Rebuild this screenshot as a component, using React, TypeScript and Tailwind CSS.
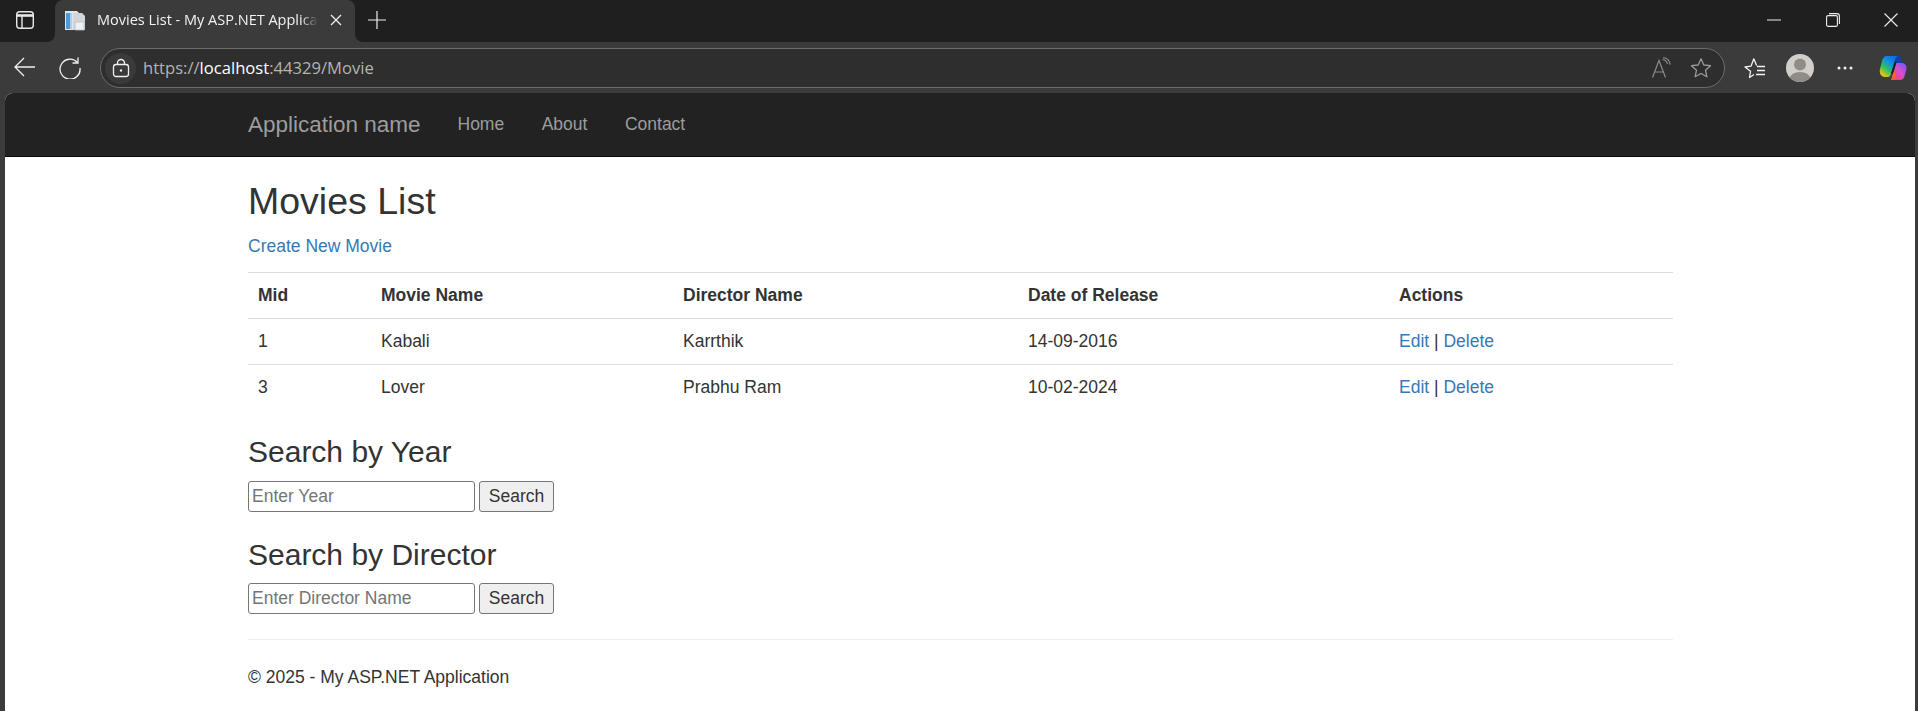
const movies = [
  { id: 1, name: 'Kabali', director: 'Karrthik', date: '14-09-2016' },
  { id: 3, name: 'Lover', director: 'Prabhu Ram', date: '10-02-2024' },
]

function SidebarIcon() {
  return (
    <svg width="20" height="20" viewBox="0 0 20 20" fill="none" stroke="#e8e8e8" strokeWidth="1.4">
      <rect x="1.7" y="1.7" width="16.6" height="16.6" rx="3" />
      <path d="M2 5.5h16" strokeWidth="2.6" />
      <path d="M7 5.5v12.5" />
    </svg>
  )
}

function Favicon() {
  return (
    <svg width="21" height="21" viewBox="0 0 21 21">
      <path d="M1 1h12l2 2v17H1z" fill="#dfe6ec" />
      <path d="M2 3h4v16H2z" fill="#4a9bdc" />
      <path d="M6 3h2v16H6z" fill="#a9d0ee" />
      <path d="M9 3h9l3 3v14H9z" fill="#d3d6d9" />
      <path d="M11 12h9v8h-9z" fill="#eef0f2" stroke="#b9bdc1" strokeWidth="0.8" />
    </svg>
  )
}

function ReadAloudIcon() {
  return (
    <svg width="22" height="22" viewBox="0 0 22 22" fill="none" stroke="#8a8a8a" strokeWidth="1.2">
      <path d="M1.5 20.5 8 3.5l6.5 17M3.6 15h8.8" />
      <path d="M11.5 2.5c2.5.3 4.4 2 5 4.6M12 .6c3.7.3 6.6 3 7.2 7" />
    </svg>
  )
}

function StarIcon({ color }: { color: string }) {
  return (
    <svg width="22" height="22" viewBox="0 0 22 22" fill="none" stroke={color} strokeWidth="1.3" strokeLinejoin="round">
      <path d="M11 1.8 13.8 8l6.7.7-5 4.5 1.4 6.6L11 16.5l-5.900 3.300 1.400-6.600-5-4.500L8.200 8z" />
    </svg>
  )
}

function FavoritesIcon() {
  return (
    <svg width="22" height="22" viewBox="0 0 22 22" fill="none" stroke="#f2f2f2" strokeWidth="1.3" strokeLinejoin="round">
      <path d="M10 17.500 5.500 20.500l1-6.200L1 10l6-.8L9.800 1.800 12.600 8.500" />
      <path d="M13 9.500h8M13 13.500h8M12 17.500h9" />
    </svg>
  )
}

function Avatar() {
  return (
    <svg width="28" height="28" viewBox="0 0 28 28">
      <defs>
        <clipPath id="avatar-clip">
          <circle cx="14" cy="14" r="14" />
        </clipPath>
      </defs>
      <g clipPath="url(#avatar-clip)">
        <rect width="28" height="28" fill="#d2cfca" />
        <circle cx="14" cy="10.500" r="6" fill="#8f8b87" />
        <ellipse cx="14" cy="25" rx="10.500" ry="7" fill="#8f8b87" />
      </g>
    </svg>
  )
}

function CopilotIcon() {
  return (
    <svg width="28" height="26" viewBox="0 0 28 26">
      <defs>
        <linearGradient id="copilot-a" x1="0.1" y1="0.9" x2="0.7" y2="0">
          <stop offset="0" stopColor="#f5c518" />
          <stop offset="0.35" stopColor="#2fc25b" />
          <stop offset="0.7" stopColor="#0f8fe8" />
          <stop offset="1" stopColor="#0f6fd8" />
        </linearGradient>
        <linearGradient id="copilot-b" x1="0.2" y1="0.9" x2="0.9" y2="0.1">
          <stop offset="0" stopColor="#f0407c" />
          <stop offset="0.5" stopColor="#d84fd0" />
          <stop offset="1" stopColor="#7f55ee" />
        </linearGradient>
        <linearGradient id="copilot-c" x1="0" y1="0" x2="1" y2="1">
          <stop offset="0" stopColor="#f58a20" />
          <stop offset="1" stopColor="#ea3a50" />
        </linearGradient>
      </defs>
      <path d="M14 1h5c2 0 3 1.500 3.500 4L24 10h-7z" fill="#0f3fa8" />
      <path d="M8 1h11c-1.500.5-2.500 2-3 4l-4 14c-.5 2-1.500 3-3 3H6c-4 0-6-4-5-8l2-8C3.700 3 5.500 1 8 1z" fill="url(#copilot-a)" />
      <path d="M17.500 8H23c3 0 5 3 4.500 6l-2 7c-.6 3-2.500 4-4.500 4H15l-2-3.500z" fill="url(#copilot-b)" />
      <path d="M12 25h9c-2 0-3.500-1.500-4-3.500L15.500 16 13 22c-.4 1-1 2.500-1 3z" fill="url(#copilot-c)" />
      <path d="M16.500 7 13 18.500" stroke="#1c1c1c" strokeWidth="1.800" />
    </svg>
  )
}

function SearchForm({ title, placeholder }: { title: string; placeholder: string }) {
  return (
    <div>
      <h3 className="text-[30px] leading-[33px] text-[#333] mb-[12.5px]">{title}</h3>
      <form className="flex gap-[4px] h-[31px]">
        <input
          placeholder={placeholder}
          className="w-[227px] h-[31px] px-[3px] border border-[#767676] rounded-[3px] bg-white text-[17.5px] placeholder:text-[#757575]"
        />
        <button
          type="button"
          className="w-[75px] h-[31px] border border-[#767676] rounded-[3px] bg-[#efefef] text-[17.5px] text-[#333]"
        >
          Search
        </button>
      </form>
    </div>
  )
}

export default function App() {
  return (
    <div className="h-[711px] overflow-hidden bg-[#3b3b3b] font-['Liberation_Sans',Arial,sans-serif]">
      {/* tab strip */}
      <div className="flex h-[42px] bg-[linear-gradient(#1f1f1f_50%,#3b3b3b_50%)] font-['Open_Sans',sans-serif]">
        <div className="w-[55px] bg-[#1f1f1f] rounded-br-lg flex items-center pl-[15px] pb-[2px]">
          <SidebarIcon />
        </div>
        <div className="w-[300px] bg-[#3b3b3b] rounded-t-lg flex items-center pl-[9px] pb-[2px]">
          <Favicon />
          <span className="ml-[12px] w-[221px] overflow-hidden whitespace-nowrap text-[14.5px] text-[#f2f2f2] [mask-image:linear-gradient(to_right,black_92%,transparent)]">
            Movies List - My ASP.NET Application
          </span>
          <svg className="ml-[12px]" width="12" height="12" viewBox="0 0 12 12" stroke="#f0f0f0" strokeWidth="1.3">
            <path d="M1 1l10 10M11 1 1 11" />
          </svg>
        </div>
        <div className="flex-1 bg-[#1f1f1f] rounded-bl-lg flex items-center pl-[13px] pb-[2px]">
          <svg width="18" height="18" viewBox="0 0 18 18" stroke="#eeeeee" strokeWidth="1.2">
            <path d="M9 0v18M0 9h18" />
          </svg>
          <div className="ml-auto flex items-center text-white">
            <svg className="mr-[45px]" width="14" height="2" viewBox="0 0 14 2" stroke="#eeeeee">
              <path d="M0 1h14" />
            </svg>
            <svg className="mr-[44px]" width="14" height="14" viewBox="0 0 14 14" fill="none" stroke="#eeeeee" strokeWidth="1.1">
              <rect x="0.600" y="2.600" width="10.800" height="10.800" rx="1.500" />
              <path d="M3 .6h8c1.300 0 2.400 1.100 2.400 2.400v8" />
            </svg>
            <svg className="mr-[20px]" width="14" height="14" viewBox="0 0 14 14" stroke="#eeeeee" strokeWidth="1.1">
              <path d="M.5.500l13 13M13.500.500l-13 13" />
            </svg>
          </div>
        </div>
      </div>

      {/* toolbar */}
      <div className="flex items-center h-[51px] pt-[1px]">
        <div className="w-[50px] flex justify-center mb-[2px]">
          <svg width="22" height="20" viewBox="0 0 22 20" fill="none" stroke="#f0f0f0" strokeWidth="1.3">
            <path d="M21 10H1M10 1l-9 9 9 9" />
          </svg>
        </div>
        <div className="w-[50px] flex justify-start pl-[9px]">
          <svg width="22" height="22" viewBox="0 0 22 22" fill="none" stroke="#f0f0f0" strokeWidth="1.3">
            <path d="M18.500 5.500A10 10 0 1 0 21 11" />
            <path d="M19 .5v5.500h-5.500" />
          </svg>
        </div>
        <div className="flex items-center w-[1625px] h-[40px] rounded-full bg-[#2e2e2e] border border-[#6c6c6c] pl-[4px] pr-[12px]">
          <div className="w-[31px] h-[31px] rounded-full bg-[#3a3a3a] flex items-center justify-center">
            <svg width="18" height="20" viewBox="0 0 18 20" fill="none" stroke="#f0f0f0" strokeWidth="1.3">
              <rect x="1.500" y="6.500" width="15" height="12" rx="2.500" />
              <path d="M5.500 6.500V5a3.500 3.500 0 0 1 7 0v1.500" />
              <circle cx="9" cy="12.500" r="1.200" fill="#f0f0f0" stroke="none" />
            </svg>
          </div>
          <span className="ml-[7px] text-[16.6px] text-[#b4b4b4] font-['Open_Sans',sans-serif]">
            https://<span className="text-white">localhost</span>:44329/Movie
          </span>
          <div className="ml-auto flex items-center gap-[17px]">
            <ReadAloudIcon />
            <StarIcon color="#9a9a9a" />
          </div>
        </div>
        <div className="flex-1 flex items-center pl-[19px]">
          <FavoritesIcon />
          <div className="ml-[20px]">
            <Avatar />
          </div>
          <svg className="ml-[23px]" width="16" height="4" viewBox="0 0 16 4" fill="#f0f0f0">
            <circle cx="2" cy="2" r="1.500" />
            <circle cx="8" cy="2" r="1.500" />
            <circle cx="14" cy="2" r="1.500" />
          </svg>
          <div className="ml-[26px]">
            <CopilotIcon />
          </div>
        </div>
      </div>

      {/* page */}
      <div className="ml-[5px] mr-[3px] h-[618px] bg-white rounded-t-lg overflow-hidden">
        <nav className="h-[64px] bg-[#222] border-b-[1.25px] border-[#080808]">
          <div className="flex items-center h-full ml-[243px] text-[#9d9d9d]">
            <a className="text-[22.5px] w-[172px] whitespace-nowrap">Application name</a>
            <ul className="flex ml-[37.5px] gap-[37.5px] text-[17.5px]">
              <li>Home</li>
              <li>About</li>
              <li>Contact</li>
            </ul>
          </div>
        </nav>

        <main className="ml-[243px] w-[1425px] pt-[24px] text-[17.5px] leading-[25px] text-[#333]">
          <h2 className="text-[37.5px] leading-[41.25px] mb-[12px]">Movies List</h2>
          <p className="mb-[13px]">
            <a className="text-[#337ab7]">Create New Movie</a>
          </p>

          <table className="w-full table-fixed border-collapse mb-[25px]">
            <colgroup>
              <col className="w-[123px]" />
              <col className="w-[302px]" />
              <col className="w-[345px]" />
              <col className="w-[371px]" />
              <col />
            </colgroup>
            <thead>
              <tr className="text-left">
                <th className="p-[10px] border-t border-[#ddd]">Mid</th>
                <th className="p-[10px] border-t border-[#ddd]">Movie Name</th>
                <th className="p-[10px] border-t border-[#ddd]">Director Name</th>
                <th className="p-[10px] border-t border-[#ddd]">Date of Release</th>
                <th className="p-[10px] border-t border-[#ddd]">Actions</th>
              </tr>
            </thead>
            <tbody>
              {movies.map(movie => (
                <tr key={movie.id}>
                  <td className="p-[10px] border-t border-[#ddd]">{movie.id}</td>
                  <td className="p-[10px] border-t border-[#ddd]">{movie.name}</td>
                  <td className="p-[10px] border-t border-[#ddd]">{movie.director}</td>
                  <td className="p-[10px] border-t border-[#ddd]">{movie.date}</td>
                  <td className="p-[10px] border-t border-[#ddd]">
                    <a className="text-[#337ab7]">Edit</a> | <a className="text-[#337ab7]">Delete</a>
                  </td>
                </tr>
              ))}
            </tbody>
          </table>

          <div className="flex flex-col gap-[26px]">
            <SearchForm title="Search by Year" placeholder="Enter Year" />
            <SearchForm title="Search by Director" placeholder="Enter Director Name" />
          </div>

          <hr className="mt-[25px] mb-[25px] border-[#eee]" />
          <footer>© 2025 - My ASP.NET Application</footer>
        </main>
      </div>
    </div>
  )
}
